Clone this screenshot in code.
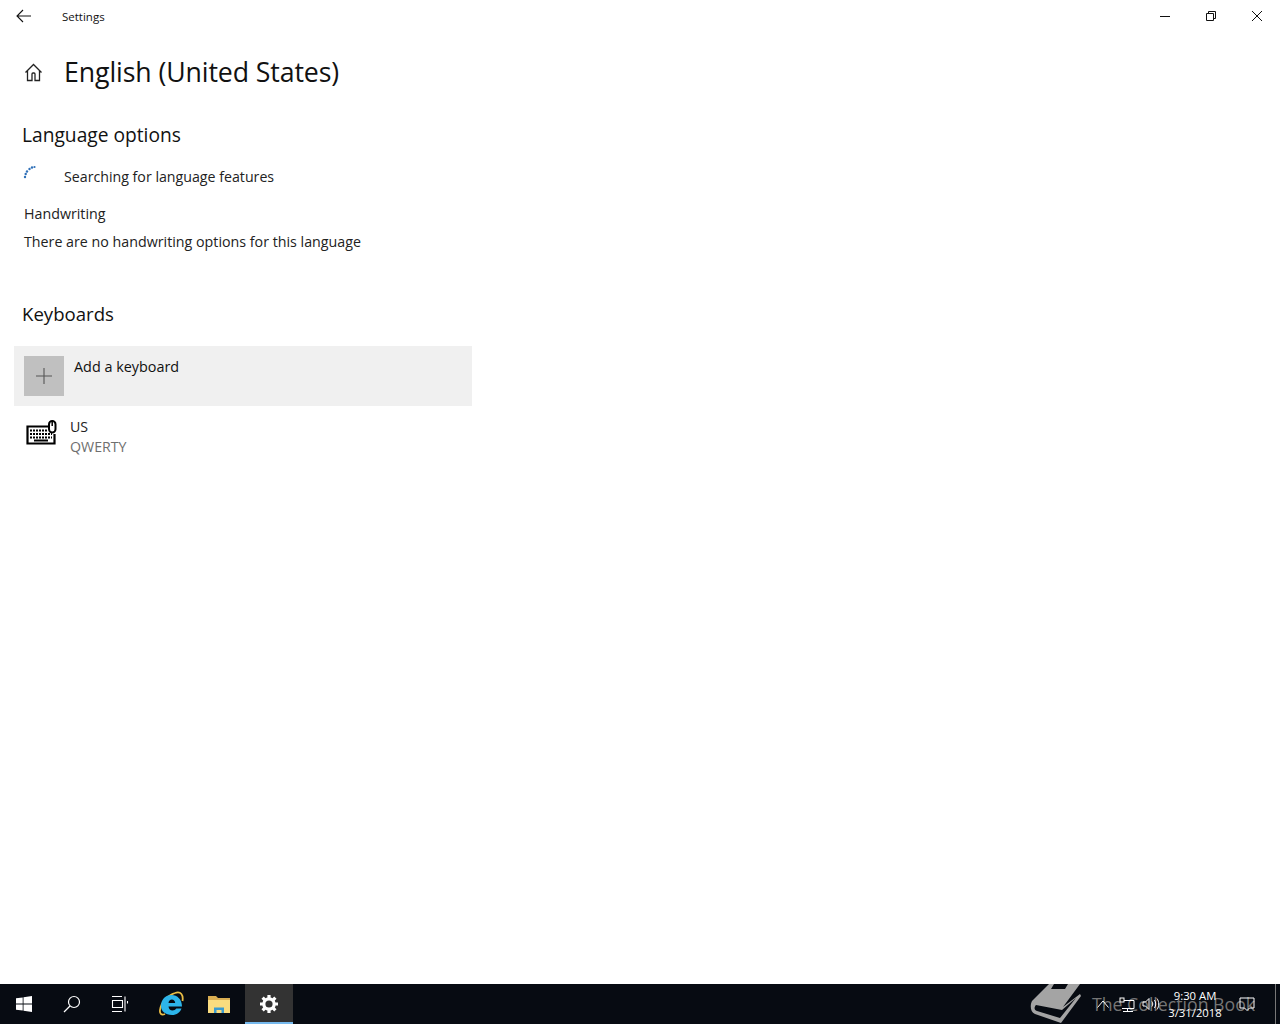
<div class="screen">
  <header class="titlebar">
    <div class="title-left">
      <svg class="back" width="16" height="14" viewBox="0 0 16 14"><path d="M7 1L1 7l6 6M1 7h14" fill="none" stroke="#111" stroke-width="1.1"/></svg>
      <span class="app-name">Settings</span>
    </div>
    <div class="winctl">
      <div class="ctl"><svg width="12" height="12" viewBox="0 0 12 12"><path d="M1 6.5h10" stroke="#111" fill="none"/></svg></div>
      <div class="ctl"><svg width="12" height="12" viewBox="0 0 12 12"><path d="M1.5 3.5h7v7h-7zM3.5 3.5v-2h7v7h-2" stroke="#111" fill="none"/></svg></div>
      <div class="ctl"><svg width="12" height="12" viewBox="0 0 12 12"><path d="M1 1l10 10M11 1L1 11" stroke="#111" fill="none"/></svg></div>
    </div>
  </header>

  <main class="content">
    <div class="page-head">
      <svg class="home" width="20" height="20" viewBox="0 0 20 20"><path d="M1.5 10.5L9.500 2.500l8 8M3.500 8.500v10H8V12q0-1 1-1h1q1 0 1 1v6.500h4.500v-10" fill="none" stroke="#222" stroke-width="1.300"/></svg>
      <h1>English (United States)</h1>
    </div>

    <h2 class="lang-h">Language options</h2>
    <div class="searching">
      <svg class="spinner" width="16" height="14" viewBox="0 0 16 14">
        <circle cx="3" cy="12" r="1.200"/><circle cx="3.700" cy="9" r="1.200"/><circle cx="5" cy="6.500" r="1.200"/><circle cx="7.500" cy="4" r="1.200"/><circle cx="10" cy="2.500" r="1.200"/><circle cx="12.500" cy="2" r="1.100"/>
      </svg>
      <span>Searching for language features</span>
    </div>
    <p class="hand-title">Handwriting</p>
    <p class="hand-note">There are no handwriting options for this language</p>

    <h2 class="kbd-h">Keyboards</h2>
    <div class="add-row">
      <div class="plus-tile">
        <svg width="16" height="16" viewBox="0 0 16 16"><path d="M8 0v16M0 8h16" stroke="#555" stroke-width="1.100" fill="none"/></svg>
      </div>
      <span class="add-label">Add a keyboard</span>
    </div>
    <div class="kbd-row">
      <svg class="kbd-icon" width="34" height="28" viewBox="0 0 34 28">
        <path d="M24 7.500H3.500v17h27V15" fill="none" stroke="#000" stroke-width="2.200"/>
        <path d="M6 11.500h17M6 15h22M6 18.500h22" stroke="#000" stroke-width="2" stroke-dasharray="2 1" fill="none"/>
        <path d="M10 21.500h14" stroke="#000" stroke-width="2" fill="none"/>
        <rect x="25" y="2" width="6.500" height="11.500" rx="3.200" fill="#fff" stroke="#000" stroke-width="2"/>
        <path d="M28.200 3v4" stroke="#000" stroke-width="1.500"/>
      </svg>
      <div class="kbd-text">
        <span class="kbd-name">US</span>
        <span class="kbd-layout">QWERTY</span>
      </div>
    </div>
  </main>

  <footer class="taskbar">
    <div class="tb-btn">
      <svg width="16" height="16" viewBox="0 0 16 16"><path fill="#fff" d="M0 2.300l6.700-.9v6.200H0zM7.500 1.300L16 0v7.600H7.500zM0 8.400h6.700v6.200L0 13.700zM7.500 8.400H16V16l-8.500-1.300z"/></svg>
    </div>
    <div class="tb-btn">
      <svg width="18" height="18" viewBox="0 0 18 18"><circle cx="11" cy="7" r="5.500" fill="none" stroke="#fff" stroke-width="1.200"/><path d="M7 11l-6 6" stroke="#fff" stroke-width="1.300"/></svg>
    </div>
    <div class="tb-btn">
      <svg width="18" height="16" viewBox="0 0 18 16"><path d="M1 .5h10M1 15.500h10M1.500 4.500h10v7h-10zM14 .5v15M16.500 5v2.500" fill="none" stroke="#fff" stroke-width="1.100"/></svg>
    </div>
    <div class="tb-btn ie">
      <svg width="26" height="28" viewBox="0 0 26 28">
        <path d="M24.500 11C25.500 5 23 1 17 3 10 5 3 12 2 20c-.5 4 1.500 5.500 5 4" fill="none" stroke="#e9bd45" stroke-width="1.800"/>
        <path d="M3 16C3 9.500 7.500 5 13.500 5S24 9.500 24 16.500H10.500c.3 2.800 1.800 4 4 4 1.700 0 3-.7 3.800-2H23.500c-1.500 4-4.800 6.500-9.500 6.500C7.500 25 3 21.500 3 16zm7.500-3h6.700c-.2-2.300-1.500-3.500-3.300-3.500-1.900 0-3.200 1.300-3.400 3.500z" fill="#2db5ea"/>
      </svg>
    </div>
    <div class="tb-btn">
      <svg width="22" height="18" viewBox="0 0 22 18">
        <path d="M0 1h8l2 2h12v3H0z" fill="#d9ae52"/>
        <path d="M0 5h22v13H0z" fill="#f9dc7f"/>
        <path d="M6 18v-5.500h10V18h-2.500v-3h-5v3z" fill="#3a9bd0"/>
      </svg>
    </div>
    <div class="tb-btn active">
      <svg width="20" height="20" viewBox="0 0 20 20">
        <circle cx="10" cy="10" r="5.200" fill="none" stroke="#fff" stroke-width="3.200"/>
        <path d="M10 1v3.500M10 15.500V19M1 10h3.500M15.500 10H19M3.600 3.600l2.500 2.500M13.900 13.900l2.500 2.500M16.400 3.600l-2.500 2.500M6.100 13.900l-2.500 2.500" stroke="#fff" stroke-width="3.200"/>
      </svg>
    </div>

    <div class="tray">
      <div class="tray-item"><svg width="12" height="8" viewBox="0 0 12 8"><path d="M.5 7.500L6 1l5.500 6.500" fill="none" stroke="#fff"/></svg></div>
      <div class="tray-item"><svg width="16" height="15" viewBox="0 0 16 15"><path d="M3 3.500h12v8H3M8.500 11.500v2.500M4 14.500h10" fill="none" stroke="#fff"/><rect x="1" y="1" width="4" height="4" fill="#111" stroke="#fff"/></svg></div>
      <div class="tray-item"><svg width="18" height="14" viewBox="0 0 18 14"><path d="M1 5h2.500L7 1.500v11L3.500 9H1zM10 4.500c1 1.500 1 3.500 0 5M12.500 3c1.600 2.500 1.600 5.500 0 8M15 1.500c2.300 3.300 2.300 7.700 0 11" fill="none" stroke="#fff"/></svg></div>
      <div class="clock"><span>9:30 AM</span><span>3/31/2018</span></div>
      <div class="notif"><svg width="16" height="16" viewBox="0 0 16 16"><path d="M1 2h14v10h-4.500L8 14.500 5.500 12H1z" fill="none" stroke="#fff"/></svg></div>
      <div class="desk-edge"></div>
    </div>

    <div class="watermark">
      <svg width="52" height="40" viewBox="0 0 52 40">
        <path d="M19 0H50L33 23 50 10l1 2L31 39 5 30C0 28 0 21 2 17z" fill="#a4a4a4"/>
        <path d="M6 21c-2 2-2 5 1 6l23 7 16-20-14 12z" fill="#070b12"/>
        <path d="M24 0h14l-3 5H21z" fill="#070b12"/>
      </svg>
      <span>The Collection Book</span>
    </div>
  </footer>
</div>

<style>
  :global(body) { margin: 0; background: #fff; }
  * { box-sizing: border-box; }
  .screen {
    width: 1280px; height: 1024px; display: flex; flex-direction: column;
    font-family: "Open Sans", "Noto Sans", sans-serif; color: #000; overflow: hidden;
  }
  .titlebar { height: 32px; display: flex; justify-content: space-between; align-items: center; flex: none; }
  .title-left { display: flex; align-items: center; padding-left: 16px; }
  .back { margin-top: -1px; }
  .app-name { font-size: 11.5px; margin-left: 30px; color: #111; }
  .winctl { display: flex; }
  .ctl { width: 46px; height: 32px; display: flex; align-items: center; justify-content: center; }

  .content { flex: 1; padding-top: 16px; min-height: 0; }
  .page-head { display: flex; align-items: center; height: 48px; padding-left: 24px; }
  .home { flex: none; }
  h1 { font-size: 26.7px; font-weight: 400; margin: 0 0 0 20px; line-height: 48px; color: #111; letter-spacing: -0.1px; }
  h2 { font-size: 19px; font-weight: 400; margin: 0; line-height: 26px; margin-left: 22px; color: #111; }
  .lang-h { margin-top: 26px; font-size: 19.2px; }
  .searching { display: flex; align-items: flex-start; height: 24px; margin-top: 16px; padding-left: 22px; font-size: 14.2px; line-height: 26px; }
  .spinner { margin-top: 1px; flex: none; }
  .spinner circle { fill: #2f70b8; }
  .searching span { margin-left: 26px; color: #222; }
  p { margin: 0 0 0 24px; font-size: 14.25px; line-height: 20px; color: #222; }
  .hand-title { margin-top: 16px; }
  .hand-note { margin-top: 8px; }
  .kbd-h { margin-top: 49px; font-size: 18.6px; }
  .add-row {
    margin: 19px 0 0 14px; width: 458px; height: 60px; background: #f0f0f0;
    display: flex; padding: 10px;
  }
  .plus-tile { width: 40px; height: 40px; background: #c0c0c0; display: flex; align-items: center; justify-content: center; flex: none; }
  .add-label { margin-left: 10px; font-size: 14.4px; line-height: 22px; color: #111; }
  .kbd-row { display: flex; margin: 11px 0 0 24px; align-items: flex-start; }
  .kbd-icon { margin-top: 2px; flex: none; }
  .kbd-text { display: flex; flex-direction: column; margin-left: 12px; font-size: 14.2px; line-height: 20px; }
  .kbd-name { color: #222; }
  .kbd-layout { color: #6f6f6f; }

  .taskbar { position: relative; height: 40px; flex: none; background: #070b12; display: flex; }
  .tb-btn { width: 48px; height: 40px; display: flex; align-items: center; justify-content: center; flex: none; }
  .tb-btn.ie { margin-left: 3px; }
  .tb-btn.active { background: #333; border-bottom: 2px solid #76b9ed; padding-top: 2px; margin-left: 2px; }
  .tray { margin-left: auto; display: flex; align-items: center; color: #fff; position: relative; z-index: 1; }
  .tray-item { width: 24px; height: 40px; display: flex; align-items: center; justify-content: center; }
  .clock { width: 64px; display: flex; flex-direction: column; align-items: center; font-size: 11.3px; line-height: 17px; }
  .notif { width: 40px; height: 40px; display: flex; align-items: center; justify-content: center; margin-right: 8px; }
  .desk-edge { width: 1px; height: 40px; background: #777; margin-right: 4px; }
  .watermark { position: absolute; left: 1030px; top: 0; height: 40px; display: flex; align-items: center; color: #757575; font-size: 17.7px; overflow: hidden; }
  .watermark svg { flex: none; margin-right: 10px; }
</style>
